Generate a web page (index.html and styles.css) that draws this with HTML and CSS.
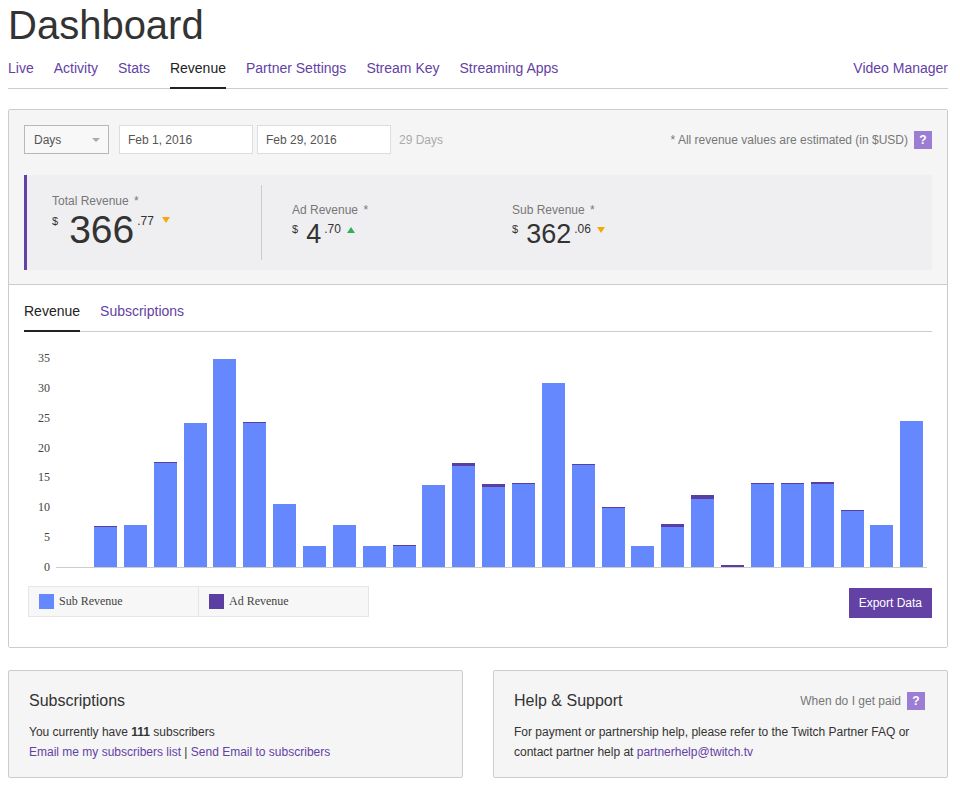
FILE: index.html
```html
<!DOCTYPE html>
<html lang="en">
<head>
  <meta charset="utf-8" />
  <title>Dashboard - Revenue</title>
  <link rel="stylesheet" href="styles.css">
</head>
<body>
<div class="page">
  <h1 class="title">Dashboard</h1>
  <nav class="nav">
    <a href="#">Live</a>
    <a href="#">Activity</a>
    <a href="#">Stats</a>
    <a href="#" class="active">Revenue</a>
    <a href="#">Partner Settings</a>
    <a href="#">Stream Key</a>
    <a href="#">Streaming Apps</a>
    <a href="#" class="right">Video Manager</a>
  </nav>

  <div class="panel">
    <div class="panel-top">
      <div class="controls">
        <div class="select">Days<span class="caret"></span></div>
        <input type="text" class="date" value="Feb 1, 2016"/>
        <input type="text" class="date" value="Feb 29, 2016"/>
        <span class="days">29 Days</span>
        <span class="note">* All revenue values are estimated (in $USD)</span>
        <span class="help">?</span>
      </div>

      <!-- totals for the selected range -->
      <div class="stats">
        <div class="stat stat-total">
          <div class="stat-label">Total Revenue <span>*</span></div>
          <div class="amount">
            <span class="cur">$</span><span class="whole">366</span><span class="cents">.77</span><span class="arrow down"></span>
          </div>
        </div>
        <div class="divider"></div>
        <div class="stat stat-ad">
          <div class="stat-label">Ad Revenue <span>*</span></div>
          <div class="amount">
            <span class="cur">$</span><span class="whole">4</span><span class="cents">.70</span><span class="arrow up"></span>
          </div>
        </div>
        <div class="stat stat-sub">
          <div class="stat-label">Sub Revenue <span>*</span></div>
          <div class="amount">
            <span class="cur">$</span><span class="whole">362</span><span class="cents">.06</span><span class="arrow down"></span>
          </div>
        </div>
      </div>
    </div>

    <div class="panel-body">
      <div class="tabs">
        <a href="#" class="active">Revenue</a>
        <a href="#">Subscriptions</a>
      </div>

      <svg id="chart" class="chart" width="908" height="240"></svg>

      <div class="chart-foot">
        <div class="legend">
          <div class="legend-item"><span class="swatch swatch-sub"></span>Sub Revenue</div>
          <div class="legend-item"><span class="swatch swatch-ad"></span>Ad Revenue</div>
        </div>
        <a href="#" class="btn">Export Data</a>
      </div>
    </div>
  </div>

  <div class="cards">
    <div class="card">
      <div class="card-head">
        <h2 class="card-title">Subscriptions</h2>
      </div>
      <p>
        You currently have <b>111</b> subscribers<br/>
        <a href="#">Email me my subscribers list</a> | <a href="#">Send Email to subscribers</a>
      </p>
    </div>
    <div class="card">
      <div class="card-head">
        <h2 class="card-title">Help &amp; Support</h2>
        <span class="paid">When do I get paid <span class="help">?</span></span>
      </div>
      <p>
        For payment or partnership help, please refer to the Twitch Partner FAQ or<br/>
        contact partner help at <a href="#">partnerhelp@twitch.tv</a>
      </p>
    </div>
  </div>
</div>

<script>
(function(){
  'use strict';

  // daily revenue in $USD, Feb 2016
  var sub = [6.70, 7.03, 17.42, 24.12, 34.84, 24.12, 10.55, 3.52, 7.03, 3.52,
             3.52, 13.73, 16.92, 13.40, 13.90, 30.82, 17.08, 9.88, 3.52, 6.70,
             11.39, 0, 13.90, 13.90, 13.90, 9.38, 7.03, 24.45];
  var ad = [0.17, 0, 0.17, 0, 0, 0.17, 0, 0, 0, 0,
            0.17, 0, 0.50, 0.50, 0.17, 0, 0.17, 0.17, 0, 0.50,
            0.67, 0.34, 0.17, 0.17, 0.34, 0.17, 0, 0];

  var svgNS = 'http://www.w3.org/2000/svg';
  var chart = document.getElementById('chart');
  var base = 227;      // zero line
  var scale = 5.971;   // px per dollar
  var step = 29.86;
  var i;

  function add(tag, attrs, text){
    var el = document.createElementNS(svgNS, tag);
    for (var k in attrs){
      el.setAttribute(k, attrs[k]);
    }
    if (text !== undefined){
      el.textContent = text;
    }
    chart.appendChild(el);
    return el;
  }

  // y axis, every $5
  for (i = 0; i <= 35; i += 5){
    add('text', {x: 26, y: Math.round(base - i * scale) + 4, 'class': 'tick'}, i);
  }

  for (i = 0; i < sub.length; i++){
    var x = Math.round(70 + i * step);
    var subTop = Math.round(base - sub[i] * scale);
    var adTop = Math.round(base - (sub[i] + ad[i]) * scale);
    if (base > subTop){
      add('rect', {x: x, y: subTop, width: 23, height: base - subTop, 'class': 'bar-sub'});
    }
    if (subTop > adTop){
      add('rect', {x: x, y: adTop, width: 23, height: subTop - adTop, 'class': 'bar-ad'});
    }
  }

  add('rect', {x: 32, y: base, width: 871, height: 1, 'class': 'axis'});
})();
</script>
</body>
</html>
```

FILE: styles.css
```css
body{
  margin: 0;
  background: #fff;
  color: #333;
  font-family: "Liberation Sans", Arial, sans-serif;
  font-size: 12px;
}
a{
  color: #6441a5;
  text-decoration: none;
}
.page{
  width: 940px;
  margin: 0 8px;
  padding-top: 2px;
}
.title{
  margin: 0;
  font-size: 40px;
  font-weight: normal;
  line-height: 46px;
  color: #333;
}

/* top menu */
.nav{
  display: flex;
  margin-top: 12px;
  border-bottom: 1px solid #ccc;
}
.nav a,
.tabs a{
  font-size: 14px;
  line-height: 16px;
  padding-bottom: 11px;
  margin-right: 20px;
  margin-bottom: -1px;
  border-bottom: 2px solid transparent;
}
.nav a.active,
.tabs a.active{
  color: #222;
  border-bottom-color: #222;
}
.nav a.right{
  margin-left: auto;
  margin-right: 0;
}

/* revenue panel */
.panel{
  margin-top: 20px;
  border: 1px solid #ccc;
  border-radius: 2px;
}
.panel-top{
  background: #f5f5f5;
  padding: 15px 15px 14px;
  border-bottom: 1px solid #ccc;
}
.controls{
  display: flex;
  align-items: center;
  height: 29px;
}
.select{
  display: flex;
  align-items: center;
  justify-content: space-between;
  width: 85px;
  height: 29px;
  box-sizing: border-box;
  padding: 0 8px 0 9px;
  border: 1px solid #b8b8b8;
  background: #f8f8f8;
  color: #555;
}
.caret{
  border-left: 4px solid transparent;
  border-right: 4px solid transparent;
  border-top: 4px solid #aaa;
}
.date{
  width: 134px;
  height: 29px;
  box-sizing: border-box;
  margin: 0 0 0 10px;
  padding: 0 8px;
  border: 1px solid #ddd;
  background: #fff;
  font: 12px "Liberation Sans", Arial, sans-serif;
  color: #555;
  outline: none;
}
.date + .date{
  margin-left: 4px;
}
.days{
  margin-left: 8px;
  color: #aaa;
}
.note{
  margin-left: auto;
  color: #777;
}
.help{
  display: inline-block;
  width: 18px;
  height: 18px;
  margin-left: 6px;
  background: #9b7dd4;
  color: #fff;
  font-weight: bold;
  font-size: 12px;
  line-height: 18px;
  text-align: center;
}

.stats{
  display: flex;
  height: 95px;
  margin-top: 21px;
  background: #efeff2;
  border-left: 3px solid #6441a5;
}
.stat{
  display: flex;
  flex-direction: column;
  justify-content: flex-end;
  box-sizing: border-box;
  padding-bottom: 19px;
}
.stat-total{
  width: 234px;
  padding-left: 25px;
}
.stat-ad{
  width: 250px;
  padding-left: 30px;
}
.divider{
  width: 1px;
  margin: 10px 0;
  background: #ccc;
}
.stat-label{
  line-height: 16px;
  color: #777;
}
.stat-label span{
  margin-left: 2px;
}
.amount{
  display: flex;
  align-items: flex-start;
  color: #333;
}
.cur{
  font-size: 11px;
  line-height: 13px;
  margin: 5px 8px 0 0;
}
.whole{
  font-size: 27px;
  line-height: 33px;
}
.cents{
  font-size: 12px;
  line-height: 14px;
  margin: 4px 0 0 3px;
}
.arrow{
  width: 0;
  height: 0;
  margin: 9px 0 0 6px;
  border-left: 4px solid transparent;
  border-right: 4px solid transparent;
}
.arrow.down{
  border-top: 6px solid #f4a80b;
}
.arrow.up{
  border-bottom: 6px solid #2bb15c;
}
.stat-total .cur{
  margin: 6px 11px 0 0;
}
.stat-total .whole{
  font-size: 39px;
  line-height: 42px;
}
.stat-total .cents{
  margin-top: 5px;
}
.stat-total .arrow{
  margin: 8px 0 0 8px;
}

/* chart */
.panel-body{
  padding: 18px 15px 29px;
  background: #fff;
}
.tabs{
  display: flex;
  border-bottom: 1px solid #ccc;
}
.chart{
  display: block;
  margin-top: 8px;
  shape-rendering: crispEdges;
}
.chart .tick{
  font-family: "Liberation Serif", "Times New Roman", serif;
  font-size: 12px;
  fill: #444;
  text-anchor: end;
}
.chart .bar-sub{
  fill: #6688ff;
}
.chart .bar-ad{
  fill: #5b3ea2;
}
.chart .axis{
  fill: #ccc;
}
.chart-foot{
  display: flex;
  justify-content: space-between;
  align-items: flex-start;
  margin-top: 6px;
}
.legend{
  display: flex;
  margin-left: 4px;
  border: 1px solid #e6e6e6;
  background: #f7f7f7;
}
.legend-item{
  display: flex;
  align-items: center;
  width: 169px;
  height: 29px;
  box-sizing: border-box;
  padding-left: 10px;
  font-family: "Liberation Serif", "Times New Roman", serif;
  font-size: 12px;
  color: #444;
}
.legend-item + .legend-item{
  width: 170px;
  border-left: 1px solid #e6e6e6;
}
.swatch{
  width: 15px;
  height: 15px;
  margin-right: 5px;
}
.swatch-sub{
  background: #6688ff;
}
.swatch-ad{
  background: #5b3ea2;
}
.btn{
  margin-top: 2px;
  padding: 0 10px;
  height: 30px;
  line-height: 30px;
  background: #6441a5;
  color: #fff;
}

/* bottom boxes */
.cards{
  display: grid;
  grid-template-columns: 455px 455px;
  column-gap: 30px;
  margin-top: 22px;
}
.card{
  background: #f5f5f5;
  border: 1px solid #ccc;
  border-radius: 2px;
  padding: 20px 20px 15px;
}
.card-head{
  display: flex;
  align-items: center;
  justify-content: space-between;
  height: 20px;
}
.card-title{
  margin: 0;
  font-size: 16px;
  font-weight: normal;
  line-height: 20px;
  color: #333;
}
.paid{
  display: flex;
  align-items: center;
  margin-right: 2px;
  color: #777;
}
.card p{
  margin: 11px 0 0;
  line-height: 20px;
}
```
